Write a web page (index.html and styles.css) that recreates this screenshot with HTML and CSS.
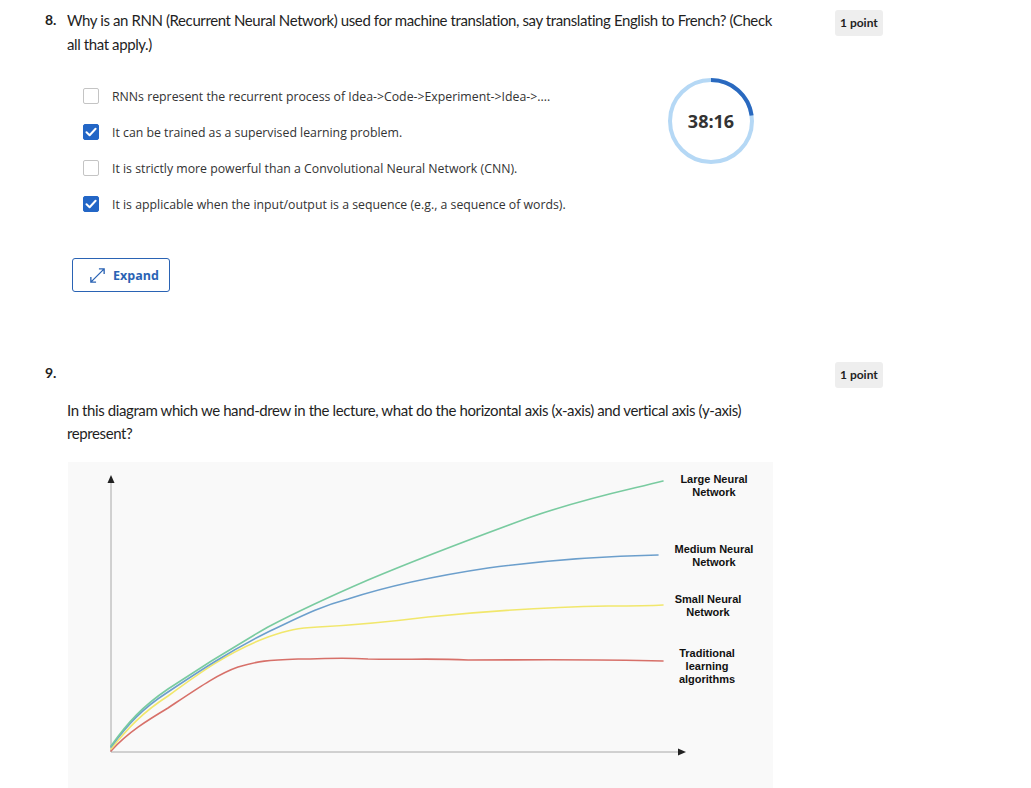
FILE: index.html
```html
<!DOCTYPE html>
<html>
<head>
<meta charset="utf-8">
<link rel="stylesheet" href="styles.css">
</head>
<body>
<div class="page">
  <section class="question q8">
    <div class="qhead">
      <div class="qnum">8.</div>
      <div class="qtext">Why is an RNN (Recurrent Neural Network) used for machine translation, say translating English to French? (Check all that apply.)</div>
      <div class="points">1 point</div>
    </div>
    <div class="qbody">
      <ul class="options">
        <li class="option"><span class="cb"></span><span>RNNs represent the recurrent process of Idea-&gt;Code-&gt;Experiment-&gt;Idea-&gt;....</span></li>
        <li class="option"><span class="cb checked"><svg viewBox="0 0 16 16" width="16" height="16"><path d="M3.5 8.3 L6.6 11.2 L12.6 4.8" fill="none" stroke="#fff" stroke-width="2" stroke-linecap="round" stroke-linejoin="round"/></svg></span><span>It can be trained as a supervised learning problem.</span></li>
        <li class="option"><span class="cb"></span><span>It is strictly more powerful than a Convolutional Neural Network (CNN).</span></li>
        <li class="option"><span class="cb checked"><svg viewBox="0 0 16 16" width="16" height="16"><path d="M3.5 8.3 L6.6 11.2 L12.6 4.8" fill="none" stroke="#fff" stroke-width="2" stroke-linecap="round" stroke-linejoin="round"/></svg></span><span>It is applicable when the input/output is a sequence (e.g., a sequence of words).</span></li>
      </ul>
      <button class="expand"><svg viewBox="0 0 20 20" width="19" height="19"><path d="M3 17 L17 3 M11.5 3 H17 V8.5 M3 11.5 V17 H8.5" fill="none" stroke="#2a63b4" stroke-width="1.4"/></svg><span>Expand</span></button>
    </div>
    <div class="timer">
      <svg viewBox="0 0 88 88" width="88" height="88">
        <circle cx="44" cy="44" r="41" fill="none" stroke="#b5d8f5" stroke-width="4"/>
        <path d="M44 3 A41 41 0 0 1 84.6 38.5" fill="none" stroke="#2a69bf" stroke-width="4"/>
      </svg>
      <span class="time">38:16</span>
    </div>
  </section>

  <section class="question q9">
    <div class="qhead">
      <div class="qnum">9.</div>
      <div class="qtext"></div>
      <div class="points">1 point</div>
    </div>
    <div class="qbody">
      <p class="prompt">In this diagram which we hand-drew in the lecture, what do the horizontal axis (x-axis) and vertical axis (y-axis) represent?</p>
      <div class="figure">
        <svg viewBox="0 0 705 326" width="705" height="326">
          <line x1="43" y1="20" x2="43" y2="290" stroke="#a8a8a8" stroke-width="1"/>
          <polygon points="43,13 39.5,21 46.5,21" fill="#222"/>
          <line x1="43" y1="290" x2="610" y2="290" stroke="#a8a8a8" stroke-width="1"/>
          <polygon points="618,290 610,286.5 610,293.5" fill="#222"/>
          <path class="curve" stroke="#d77069" d="M43 289 C60 270 80 258 100 246 C130 226 150 212 170 205 C190 199 200 198 230 197 C260 197 270 195 300 197 C340 198 360 196 400 198 C460 198 520 197 595 199"/>
          <path class="curve" stroke="#f1e76c" d="M43 287 C60 266 75 250 100 234 C130 212 160 190 200 175 C220 168 230 166 250 165 C290 163 320 160 360 155 C420 149 480 145 540 144 C560 144 580 144 595 143"/>
          <path class="curve" stroke="#6c9fcc" d="M43 285 C60 262 75 246 100 230 C130 210 160 190 200 170 C230 156 250 145 280 137 C320 124 360 115 420 106 C480 98 540 94 590 93"/>
          <path class="curve" stroke="#79cba0" d="M43 284 C60 260 75 244 100 227 C130 207 160 188 200 165 C240 144 270 131 300 118 C350 97 400 78 460 56 C520 35 560 28 595 19"/>
          <g class="labels">
            <text x="646" y="21">Large Neural</text>
            <text x="646" y="33.5">Network</text>
            <text x="646" y="91">Medium Neural</text>
            <text x="646" y="103.5">Network</text>
            <text x="640" y="141">Small Neural</text>
            <text x="640" y="153.5">Network</text>
            <text x="639" y="195">Traditional</text>
            <text x="639" y="208">learning</text>
            <text x="639" y="221">algorithms</text>
          </g>
        </svg>
      </div>
    </div>
  </section>
</div>
</body>
</html>
```

FILE: styles.css
```css
* { box-sizing: border-box; }
html, body { margin: 0; padding: 0; background: #fff; }
body {
  font-family: "Source Sans Pro", Lato, "Open Sans", sans-serif;
  color: #1f1f1f;
  width: 1031px;
  height: 788px;
  overflow: hidden;
}
.page { padding-left: 45px; }
.question { position: relative; }
.q8 { padding-top: 8px; }
.q9 { padding-top: 69px; }
.qhead { display: flex; align-items: flex-start; }
.qnum {
  width: 22px;
  font-size: 14px;
  font-weight: 700;
  line-height: 24px;
  color: #1f1f1f;
}
.qtext {
  width: 768px;
  padding-right: 50px;
  font-size: 15px;
  letter-spacing: -0.4px;
  line-height: 24px;
  color: #1f1f1f;
}
.points {
  margin-top: 2px;
  background: #eeeeee;
  border-radius: 3px;
  font-size: 12px;
  font-weight: 700;
  line-height: 26px;
  height: 26px;
  padding: 0 5px;
  color: #1f1f1f;
  font-family: "Source Sans Pro", Lato, sans-serif;
}
.q9 .points { margin-top: 1px; }
.qbody { padding-left: 22px; }
.options {
  list-style: none;
  margin: 22px 0 0 0;
  padding: 0 0 0 16px;
}
.option {
  display: flex;
  align-items: center;
  gap: 13px;
  height: 36px;
  font-family: "Open Sans", sans-serif;
  font-size: 12.3px;
  color: #333;
}
.cb {
  width: 16px;
  height: 16px;
  border: 1px solid #c4c4c4;
  border-radius: 2px;
  background: #fff;
  flex: none;
  display: flex;
}
.cb.checked {
  background: #2366c6;
  border-color: #2366c6;
}
.cb.checked svg { margin: -1px; }
.expand {
  margin-top: 36px;
  margin-left: 5px;
  width: 98px;
  height: 34px;
  border: 1px solid #2a63b4;
  border-radius: 3px;
  background: #fff;
  display: flex;
  align-items: center;
  gap: 6px;
  padding: 0 0 0 15px;
  color: #2a63b4;
  font-family: "Open Sans", sans-serif;
  font-size: 12.5px;
  font-weight: 700;
  cursor: pointer;
}
.timer {
  position: absolute;
  left: 622px;
  top: 77px;
  width: 88px;
  height: 88px;
  display: flex;
  align-items: center;
  justify-content: center;
}
.timer svg { position: absolute; left: 0; top: 0; }
.time {
  position: relative;
  font-family: "Open Sans", sans-serif;
  font-size: 18px;
  font-weight: 700;
  color: #333;
}
.prompt {
  margin: 11px 0 0 0;
  width: 730px;
  font-size: 15px;
  letter-spacing: -0.4px;
  line-height: 23px;
  color: #1f1f1f;
}
.figure {
  margin-top: 17px;
  margin-left: 1px;
  width: 705px;
  height: 326px;
  background: #f9f9f9;
}
.figure svg { display: block; }
.curve { fill: none; stroke-width: 1.6; stroke-linecap: round; }
.labels text {
  font-family: "Liberation Sans", Arial, sans-serif;
  font-size: 11px;
  font-weight: 700;
  fill: #111;
  text-anchor: middle;
}
```
